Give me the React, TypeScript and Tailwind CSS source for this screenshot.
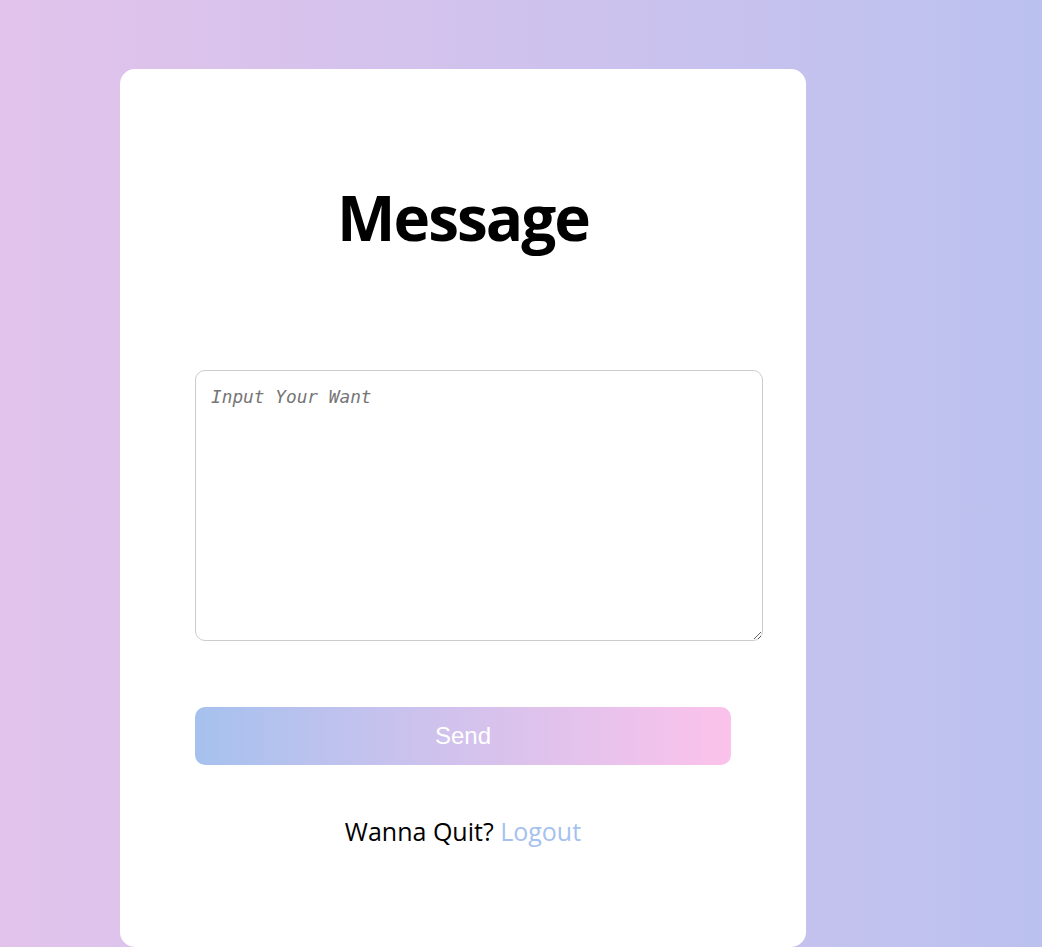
import React from 'react'

export default function App() {
  return (
    <div className="min-h-screen w-full overflow-hidden bg-linear-to-r from-[#e2c3eb] to-[#bbc1ef] pt-[69px]">
      <div className="ml-[120px] flex h-[878px] w-[686px] flex-col items-center rounded-[15px] bg-white px-[75px] pt-[116px] font-['Open_Sans',sans-serif]">
        <h1 className="text-[62px] font-bold leading-[64px] tracking-[-2px] text-black">Message</h1>
        <textarea
          placeholder="Input Your Want"
          className="mt-[121px] h-[271px] w-[568px] shrink-0 self-start rounded-[10px] border border-[#cccccc] px-[15px] pt-[13px] font-['DejaVu_Sans_Mono',monospace] text-[17.8px] outline-none placeholder:italic placeholder:text-[#757575]"
        />
        <button className="mt-[66px] h-[58px] w-full rounded-[10px] bg-linear-to-r from-[#a6c1ee] to-[#fbc2eb] font-['Liberation_Sans',Arial,sans-serif] text-[24px] text-white">
          Send
        </button>
        <p className="mt-[54px] text-[25px] leading-[24px] text-black">
          Wanna Quit? <a className="text-[#a6c1ee]">Logout</a>
        </p>
      </div>
    </div>
  )
}
